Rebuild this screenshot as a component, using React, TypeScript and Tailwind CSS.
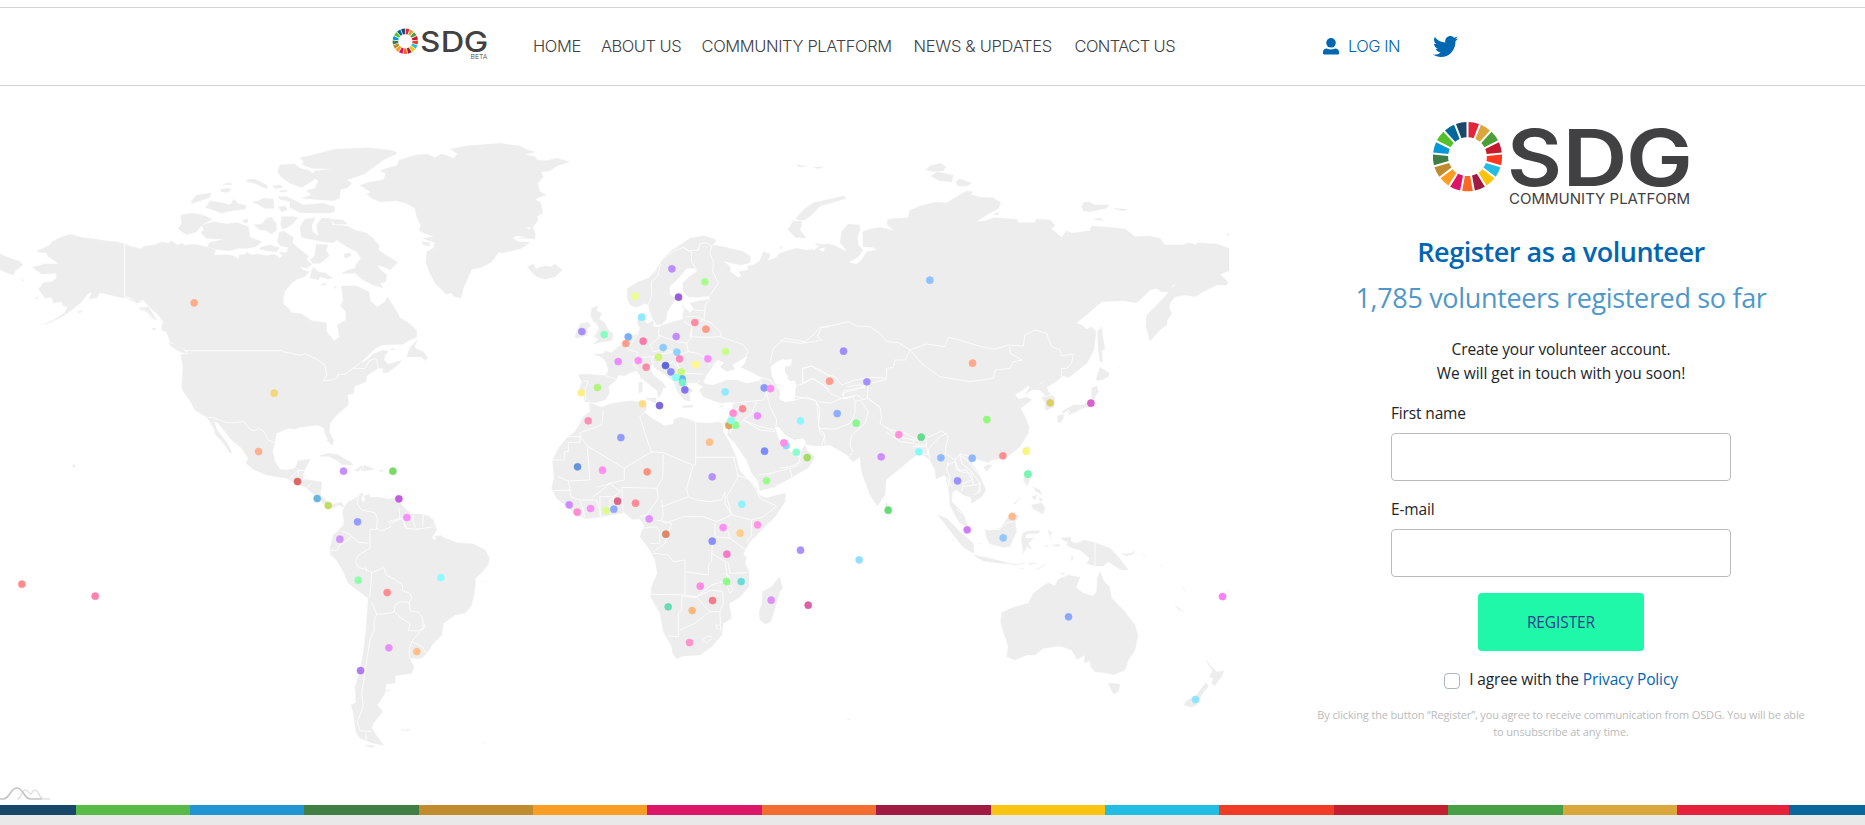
import React from 'react';

const GOALS = [
  '#e5243b', '#dda63a', '#4c9f38', '#c5192d', '#ff3a21', '#26bde2', '#fcc30b', '#a21942', '#fd6925',
  '#dd1367', '#fd9d24', '#bf8b2e', '#3f7e44', '#0a97d9', '#56c02b', '#00689d', '#19486a',
];

const STRIPES = [
  'w-[75.5px] bg-[#17486a]', 'flex-1 bg-[#58ba47]', 'flex-1 bg-[#2095d3]', 'flex-1 bg-[#3f7f44]',
  'flex-1 bg-[#c08c2d]', 'flex-1 bg-[#f99d25]', 'flex-1 bg-[#dd1768]', 'flex-1 bg-[#f36c30]',
  'flex-1 bg-[#a11a44]', 'flex-1 bg-[#fbc412]', 'flex-1 bg-[#22bde2]', 'flex-1 bg-[#f03c27]',
  'flex-1 bg-[#c31f2f]', 'flex-1 bg-[#48a045]', 'flex-1 bg-[#dca73a]', 'w-[112px] bg-[#e5213b]',
  'w-[76px] bg-[#08679d]',
];

type Dot = [number, number, string];
// Shapes of a region are in thirds of a pixel, measured from its origin.
type Region = { x: number; y: number; land: string[]; water?: string[]; borders: string[]; dots: Dot[] };

const REGIONS: Region[] = [
  {
    x: 0, y: 130,
    land: [
      '110,362 125,357 145,348 160,333 183,322 211,313 235,320 258,324 285,327 325,334 352,336 374,342 395,350 425,356 430,349 462,346 485,336 505,340 515,333 533,346 545,339 555,346 585,343 620,351 648,360 640,376 675,374 700,377 716,388 718,374 735,374 742,366 752,374 775,373 800,377 825,373 838,385 848,378 837,366 860,368 865,352 842,348 832,335 838,308 850,303 880,322 878,338 895,355 925,378 920,390 936,403 920,415 902,409 905,418 928,425 915,440 890,448 875,460 855,482 850,505 850,522 862,532 875,548 905,552 935,572 978,578 980,605 1003,632 1018,620 1012,585 1037,570 1038,545 1022,527 1030,510 1024,468 1045,468 1068,467 1090,478 1107,485 1110,512 1132,531 1155,515 1162,500 1180,528 1195,552 1198,562 1230,582 1250,600 1250,622 1225,632 1208,643 1145,645 1125,656 1100,680 1072,705 1100,690 1120,672 1150,660 1165,665 1155,675 1152,690 1165,703 1190,695 1205,692 1190,708 1162,728 1148,727 1150,715 1135,714 1115,727 1100,738 1098,755 1065,768 1060,790 1042,795 1046,815 1042,828 1010,855 990,880 988,905 1000,930 998,945 990,940 975,912 972,895 955,885 930,888 900,892 885,897 865,895 830,910 824,935 818,965 825,995 840,1018 860,1020 885,1015 895,992 930,988 925,1000 912,1025 912,1048 930,1050 965,1057 962,1095 978,1112 990,1122 1005,1122 1025,1116 1032,1130 1022,1128 1015,1125 1000,1134 985,1130 960,1112 940,1092 920,1073 890,1062 860,1045 830,1040 800,1035 760,1018 738,1000 745,985 725,955 695,930 675,905 655,880 643,873 648,895 665,918 682,940 697,970 688,965 668,937 645,912 645,900 632,880 620,862 585,840 570,812 550,785 545,770 547,740 549,710 542,673 565,673 560,662 540,650 510,635 500,605 485,600 487,575 470,550 450,535 430,512 410,522 385,505 360,502 340,497 310,490 297,490 292,502 268,508 275,486 262,492 245,515 215,540 185,560 155,575 130,584 165,568 195,548 203,530 190,528 185,515 160,518 155,502 135,505 125,490 115,478 130,458 155,455 170,445 168,430 125,432 98,412 135,402 175,402 160,390 145,380 140,368 118,367',
      '0,372 20,380 45,390 58,393 68,405 60,412 48,420 40,434 20,428 0,418',
      '543,255 575,250 605,254 637,268 610,282 588,306 560,314 533,296 545,282',
      '605,285 640,275 680,282 712,278 745,290 750,322 785,335 768,350 740,355 715,355 688,362 650,358 622,350 628,338 672,328 620,325 602,308 612,300',
      '617,233 630,212 665,218 690,225 702,208 715,222 738,226 735,238 690,243 665,250 640,240',
      '572,215 590,195 634,189 628,203 600,212 578,220', '660,180 680,175 694,177 685,186 665,186', '668,163 690,158 698,164', '740,148 765,148 800,165 803,176 785,170 765,160 742,155',
      '756,215 775,213 790,205 820,208 822,235 795,235 778,225', '818,168 840,165 850,172 825,176', '838,182 862,181 860,185 842,186',
      '835,120 840,105 882,102 900,115 930,122 948,145 925,160 905,172 870,160 845,142 832,125',
      '900,84 950,72 1005,58 1105,53 1180,62 1192,70 1150,90 1125,108 1092,133 1040,150 1055,160 1040,175 1022,178 1018,205 1000,212 905,205 935,195 920,182 945,175 955,153 935,135 945,122 1000,117 935,115 905,103 912,95',
      '835,200 860,200 882,210 910,225 970,220 1003,230 1003,245 985,249 900,248 870,232 870,215 840,208', '835,232 855,228 862,240 845,245',
      '845,260 880,260 893,263 880,280 858,295 848,298 842,285', '762,285 785,282 800,265 815,262 828,280 830,300 815,312 795,300 780,300',
      '728,270 742,266 745,276 735,280', '785,350 810,345 838,353 830,365 800,362 778,357',
      '903,315 900,290 915,268 945,264 935,285 938,305 955,318 950,285 965,265 990,265 998,285 1040,288 1065,300 1100,310 1120,325 1138,348 1135,360 1165,380 1193,397 1182,408 1170,420 1155,412 1130,405 1142,420 1160,435 1158,455 1140,460 1148,473 1120,465 1090,450 1065,430 1025,430 1040,422 1065,415 1068,405 1083,385 1070,365 1040,350 1010,330 1000,338 970,335 935,328 918,325 905,322',
      '990,267 1030,270 1042,282 1005,283', '1032,372 1050,368 1053,378 1035,385',
      '948,343 985,345 978,360 988,378 960,400 938,400 930,390 945,378', '940,412 955,425 978,430 998,444 985,447 960,440 955,450 930,443 935,420',
      '962,465 980,458 975,466', '1003,470 1008,468 1007,476', '1253,628 1243,650 1250,658 1270,665 1283,685 1275,692 1265,680 1220,680 1232,650',
      '505,638 530,645 552,660 563,672 540,665 515,650', '232,545 250,541 240,549', '457,595 467,594 462,603', '418,533 445,530 470,570 455,565 440,545 422,540',
      '105,503 115,500 112,507', '62,448 72,452', '218,1002 228,1008 220,1014', '960,978 985,970 1010,975 1050,998 1058,1005 1025,1003 1010,990 985,978',
      '1088,1008 1118,1018 1090,1020 1065,1020', '1170,658 1185,655 1180,660',
    ],
    borders: [
      '374,342 374,500 395,505 410,522 430,510 460,545 488,570 485,585', '560,662 845,662 855,667 875,669 885,673 905,676 915,671 950,687 975,705 980,735 970,752 995,750 1013,743 1013,733 1035,733 1060,715 1095,716 1110,690 1128,686 1135,714',
      '1060,715 1080,700', '620,862 645,864 680,878 710,878 730,873 750,898 765,903 775,895 790,903 805,930 822,938', '870,1046 880,1035 895,1020 912,1022', '895,1020 895,1040', '900,1055 915,1046', '1088,1000 1090,1020', '425,535 450,555 468,575', '430,550 460,580',
    ],
    dots: [[582, 518, '#ffac88'], [822, 789, '#f4d67b'], [775, 964, '#ffb08d']],
  },
  {
    x: 300, y: 130,
    land: [
      '180,165 215,155 250,150 258,130 240,122 270,112 290,108 298,90 345,76 380,72 405,83 425,72 462,85 472,72 452,57 500,48 600,40 660,48 682,60 705,66 672,73 705,80 712,90 740,92 770,85 808,95 770,108 750,122 722,125 730,140 712,160 720,185 738,195 722,200 705,208 722,218 728,250 710,258 715,268 698,293 675,290 705,310 705,326 665,325 640,328 655,335 690,337 665,355 605,370 597,366 575,395 545,412 515,418 505,440 490,475 482,505 460,498 455,488 438,492 405,460 390,430 378,398 380,365 400,355 405,338 370,325 402,320 358,303 362,285 350,260 345,235 320,220 290,212 240,215 215,205 200,192 212,187',
      '365,335 390,338 388,348 370,345', '682,410 700,402 708,418 718,413 735,408 752,410 765,403 787,420 765,440 735,448 710,440 695,425',
    ],
    water: ['638,325 650,317 685,322 665,322 650,327'],
    borders: [],
    dots: [],
  },
  {
    x: 280, y: 440,
    land: [
      '190,205 205,185 235,170 245,158 250,163 243,175 250,188 256,178 253,168 268,163 270,172 295,172 330,178 350,172 360,190 375,205 395,222 420,222 445,228 460,240 470,270 455,295 465,300 490,292 530,308 580,312 615,330 628,355 625,372 607,395 587,415 583,460 575,495 555,520 525,525 490,550 485,585 460,610 440,640 425,655 388,655 402,680 395,700 345,707 345,730 318,732 315,760 292,795 308,815 280,850 275,865 285,880 310,915 280,910 240,895 228,875 220,820 213,795 228,788 225,740 238,700 250,640 258,570 265,475 205,430 190,395 170,360 152,345 150,325 160,285 175,272 190,255 192,240 188,220',
      '465,288 485,287 490,297 470,300', '140,0 162,0 155,15', '120,48 145,40 175,45 215,68 218,74 185,72 170,60 145,48', '222,90 240,88 235,94', '240,78 258,77 282,88 255,92 240,90',
      '297,91 310,91 308,95 298,94', '365,868 375,870 370,874', '378,868 390,867 382,874', '315,750 332,751 322,754', '607,905 618,912', '255,915 285,917 275,923', '356,170 366,168 364,176',
    ],
    borders: [
      '235,170 232,192 245,210 285,218 292,235 290,268 270,268 270,325 235,345 227,365 235,383 258,388 275,398 272,445 268,475', '150,330 170,333 180,315 210,295 212,285 185,272', '212,287 235,307 265,310', '292,265 305,273 333,260 325,245 360,235 357,205',
      '333,250 365,235 380,265 410,268 460,260', '400,225 398,245 410,268', '430,223 428,258', '370,235 375,262', '275,398 312,383 318,405 345,418 367,435 368,452 390,460 395,475 388,487 360,485 345,495 343,515 325,520 290,523 275,485',
      '388,487 390,512 415,517 428,535 430,565 415,573 385,572 390,550 365,535 343,515', '432,550 435,560 395,605 388,625 388,655', '395,605 425,618 440,640', '290,523 282,545 283,570 270,600 262,650 255,700 245,760 250,800 232,845 240,872 275,875', '258,880 258,915', '258,380 260,395', '242,85 242,95',
      '95,130 80,143', '70,100 72,118', '128,150 118,160',
    ],
    dots: [[190, 93, '#c58fff'], [338, 93, '#79db66'], [52, 124, '#dc6766'], [111, 175, '#67b5dc'], [144, 196, '#c2db62'], [356, 176, '#c35ddb'], [232, 245, '#919eff'], [380, 232, '#f78eff'], [179, 297, '#cf93ff'], [234, 420, '#8effac'], [482, 412, '#90fbff'], [321, 457, '#ff8c93'], [326, 623, '#e690ff'], [410, 634, '#ffc08c'], [241, 691, '#ad79f5']],
  },
  {
    x: 530, y: 220,
    land: [
      '165,545 160,525 145,525 150,500 155,485 145,465 160,462 200,465 228,467 235,450 228,425 215,412 193,402 220,402 225,393 245,398 262,382 280,372 295,355 325,340 330,325 322,310 325,290 340,278 352,285 345,305 355,315 378,322 400,315 440,302 460,298 458,282 465,265 480,278 492,265 480,250 510,242 540,238 538,228 500,232 475,230 460,215 458,190 478,170 500,155 495,145 470,145 458,160 440,180 418,200 420,225 440,235 425,255 412,275 408,300 395,313 380,315 370,300 360,275 355,255 345,250 320,262 300,255 292,235 292,205 325,185 355,175 375,155 395,120 420,95 450,75 480,55 520,47 555,58 558,65 545,75 580,80 640,95 662,110 660,128 630,135 600,128 578,122 600,140 600,155 625,173 635,165 625,155 655,150 652,138 670,135 690,122 700,95 722,103 712,122 735,115 750,100 780,90 800,85 850,95 865,78 895,72 900,72 900,675 860,678 820,672 785,660 765,645 735,622 725,650 600,650 592,615 578,612 590,600 608,570 610,548 600,545 575,550 545,540 520,530 508,510 520,500 500,490 480,490 468,497 490,512 478,520 480,545 465,540 450,525 440,510 432,485 400,460 375,445 368,432 358,440 370,465 395,485 410,503 400,503 395,520 384,534 382,512 370,503 345,483 330,465 320,452 300,458 285,467 265,465 258,480 235,500 238,520 225,540 195,548',
      '185,265 203,258 200,272 215,280 208,297 225,310 235,330 250,342 245,362 215,366 190,372 205,358 192,350 200,340 207,325 200,310 190,305 182,285', '150,312 175,306 182,318 172,325 172,345 140,355 135,350 140,335', '345,535 378,533 377,550', '326,488 337,485 337,515 327,518', '330,470 337,462 337,480', '455,558 490,555 485,562 460,563', '350,312 368,303 372,315 355,320', '775,30 790,8 812,3 815,15 805,35 825,55 795,50', '568,560 580,554 576,562', '0,25 8,20 15,40 12,55 0,52', '457,260 462,255 460,268',
    ],
    water: [
      '520,487 530,465 545,445 552,430 565,420 582,428 570,440 590,455 615,448 608,435 625,425 640,415 652,408 645,430 632,442 670,460 695,475 685,483 650,490 620,480 590,480 550,495 528,492',
      '722,440 740,425 760,418 785,430 782,437 755,442 748,452 765,462 775,480 770,490 795,500 795,515 795,542 765,546 747,535 752,515 735,490 725,465',
      '865,88 885,82 880,95', '735,622 745,620 765,645 790,660 820,655 828,668 815,690 790,700 765,682 745,650',
    ],
    borders: [
      '355,255 365,225 365,185 385,165 392,125 420,100 460,82 485,98 485,125 500,150', '460,82 475,92 505,90 510,70 530,68 545,78 540,100 550,125 548,155 565,190 540,225', '540,238 525,255 525,275 522,300 545,310 575,340 570,350 530,352 480,350 485,320 520,300', '465,290 500,290 522,300', '485,318 462,305', '490,270 525,272', '388,318 385,345 410,355 445,365 470,370 485,350 485,325', '470,370 475,395 460,400 430,395 400,390 370,395 360,375 385,355 390,345', '280,375 300,390 325,398 315,420 310,432 325,452', '315,415 340,412 370,410 365,425 375,430', '370,410 400,400 430,398 440,420 420,430 395,430 375,445', '475,395 505,400 520,410 540,435', '430,430 455,450 470,460 520,462', '455,400 440,425 450,455 455,490 500,490', '500,490 510,480', '570,350 600,360 640,375 655,395 645,410', '160,482 175,485 165,510 168,540', '228,467 258,478', '325,340 310,360 300,380', '695,478 670,465 720,480 735,500 750,510', '690,483 710,520 700,540 650,545 610,550', '610,575 630,560 650,545', '640,600 665,580 680,545', '640,600 690,620 735,630', '710,520 720,560 740,600 738,622', '720,430 730,385 765,355 825,365 855,340 870,322 900,320', '818,490 818,445 845,438 880,455 900,470', '795,540 830,530 860,545 865,600 870,640 885,650 885,675', '795,500 820,490 850,475 900,510', '600,608 605,580', '625,600 605,610 600,640', '790,700 805,710 815,690'],
    dots: [[425, 146, '#b98fff'], [524, 185, '#a9ff8c'], [315, 228, '#ebff8c'], [445, 231, '#9b5ddb'], [334, 291, '#8feaff'], [155, 334, '#aa8cff'], [222, 343, '#84ffc0'], [294, 350, '#78b0ff'], [287, 370, '#ff9c87'], [339, 363, '#f97bab'], [438, 349, '#c18dff'], [494, 307, '#ff8aa5'], [527, 327, '#ff9c88'], [399, 382, '#8dcbff'], [440, 396, '#8ed3ff'], [385, 411, '#cdf576'], [448, 416, '#ff8abf'], [264, 424, '#e98cff'], [324, 421, '#ff8efb'], [348, 441, '#ff8aa3'], [533, 416, '#f98eff'], [586, 394, '#c6ff8a'], [497, 433, '#fff98b'], [406, 436, '#5d67db'], [422, 455, '#898cff'], [453, 455, '#c9fa7f'], [456, 476, '#67b7e8'], [437, 472, '#88fff6'], [457, 487, '#76f1cb'], [464, 509, '#8571f4'], [202, 502, '#b0f67c'], [153, 518, '#ffee88'], [337, 551, '#ffdc87'], [388, 556, '#7d66dc'], [585, 515, '#8feaff'], [702, 503, '#889aff'], [721, 505, '#ff8cf0'], [637, 566, '#ff8a95'], [609, 579, '#ff8dd2'], [596, 616, '#dba855'], [616, 615, '#8cff94'], [603, 601, '#8bffe5'], [682, 587, '#e98eff'], [811, 602, '#8cf7ff'], [174, 602, '#ff8fb8'], [272, 652, '#929cff'], [538, 666, '#ffc08c'], [703, 693, '#7c8bfa'], [768, 676, '#8edaff'], [761, 668, '#ff8de5'], [798, 696, '#8bffd0'], [831, 712, '#a1dc63'], [142, 740, '#6692de'], [217, 750, '#ff8ff1'], [351, 755, '#fb9180'], [546, 770, '#b590ff'], [709, 782, '#98ff89']],
  },
  {
    x: 530, y: 400,
    land: [
      '178,10 190,12 215,22 240,12 260,8 300,3 330,5 345,3 350,22 345,38 370,58 405,78 430,72 432,58 450,52 475,57 500,68 540,70 560,66 577,70 580,95 600,130 618,170 628,210 650,235 680,265 686,285 710,294 730,288 767,280 765,305 735,350 700,385 660,425 645,450 640,462 650,475 645,490 657,515 657,560 630,590 597,612 605,655 580,670 575,705 545,740 510,765 460,768 440,777 428,760 425,740 400,695 390,640 362,590 365,560 382,520 375,480 360,450 330,410 343,375 330,357 305,358 285,338 245,345 215,350 165,357 140,345 105,315 80,295 65,265 72,235 68,180 85,145 110,115 135,95 150,70 160,50 180,35',
      '597,78 592,105 615,130 650,180 665,220 683,240 690,272 730,262 780,235 835,203 855,170 830,150 822,128 812,150 790,162 770,145 745,112 735,80 725,5 612,0 605,50',
      '748,530 758,565 750,575 735,625 722,665 705,672 690,660 688,635 697,610 697,575 725,560', '811,624 816,626', '765,40 820,25 860,35 960,35 960,170 900,135 830,130 790,120 765,100',
    ],
    water: ['738,83 748,83 765,105 792,120 820,115 828,130 812,150 790,160 768,143 745,112'],
    borders: [
      '72,272 120,270 122,290 150,300 158,325 158,355', '68,180 103,180 103,155 115,155 115,127 150,127 150,98 215,75 220,30', '103,110 150,110', '150,110 175,140 283,205 283,240 240,250 200,262', '172,140 180,240 115,243 85,230', '283,205 365,155 400,158 487,195 487,205 470,265 475,290 395,320', '365,158 345,100 330,50 350,30', '400,165 398,235 380,265 275,262 280,340', '380,265 385,295 350,345 330,350', '395,300 400,345 395,360 405,370 460,350 520,350 560,365 605,345 585,310 585,280', '497,68 497,172 620,172', '497,172 497,195 487,195', '475,290 500,300 540,305 575,300 585,275', '610,170 625,230 590,290', '590,290 605,345 665,360 700,350 740,318 695,298 680,280', '665,360 663,410 650,425', '620,225 660,240 685,280', '555,370 555,410 600,415 645,448', '550,415 545,460 595,490 600,520 655,518', '545,460 545,485 535,495 535,525 465,515 465,480 430,485 415,465 370,460', '380,360 425,370 405,430 370,455', '335,385 380,380 390,395 388,430 360,430', '465,515 465,585 362,583', '465,585 500,590 545,555 595,540 585,490', '455,590 455,630 445,640 445,710 415,708', '455,590 500,592 540,635 570,635 580,610 578,575 545,570 500,590', '540,635 495,670 450,690', '570,635 572,690 560,685 558,675 572,675', '595,540 610,570 600,580 592,560', '210,350 210,290 250,290 255,340', '185,295 240,250 270,275 240,300 240,340', '150,300 200,300 215,350', '165,357 158,320', '545,715 530,730 520,720 530,708 545,710', '600,95 640,60 690,90 735,95', '683,225 720,220 780,205 785,230', '780,205 805,195 812,160', '600,412 590,385 600,370', '580,520 600,530', '115,243 120,270'],
    dots: [[117, 314, '#cb8cff'], [141, 336, '#ff8cd0'], [181, 325, '#fb90f7'], [228, 331, '#dbff86'], [251, 327, '#90a8ff'], [262, 303, '#db6688'], [316, 309, '#ff8c98'], [357, 356, '#df8fff'], [407, 402, '#dc8766'], [635, 312, '#90f4ff'], [579, 382, '#ff8ef5'], [682, 374, '#ff93e2'], [630, 399, '#ffcf88'], [546, 423, '#8c8dff'], [590, 462, '#f97acb'], [589, 544, '#8aff87'], [633, 544, '#66dcdb'], [510, 558, '#ff8ce0'], [547, 601, '#f57a8c'], [414, 620, '#65dcb6'], [486, 631, '#f9b77d'], [723, 600, '#dc8fff'], [834, 615, '#db62a5'], [478, 727, '#ff93cd'], [811, 450, '#ab90ff']],
  },
  {
    x: 780, y: 150,
    land: [
      '0,313 35,302 50,308 95,298 108,305 118,292 105,280 120,283 160,285 200,305 195,295 180,278 185,245 205,222 238,225 240,240 232,260 235,285 248,300 235,320 205,337 230,343 245,330 260,305 290,300 280,292 250,290 248,245 270,237 300,232 345,243 322,225 322,208 385,203 388,183 420,168 465,157 500,158 530,140 560,123 580,125 570,133 600,142 640,143 662,158 655,175 620,195 588,215 615,213 640,203 665,205 710,208 715,218 765,218 768,207 810,210 825,225 815,237 845,262 860,242 875,250 930,242 935,228 1000,233 1035,237 1065,260 1105,258 1140,265 1155,285 1210,285 1245,300 1252,278 1310,282 1347,295 1347,362 1320,373 1343,395 1340,405 1310,405 1270,425 1245,440 1215,435 1185,440 1170,460 1168,475 1175,492 1162,510 1160,525 1140,540 1110,573 1098,530 1100,495 1125,470 1150,445 1185,405 1180,403 1170,425 1145,425 1130,415 1110,420 1085,445 1070,458 1030,452 965,455 930,485 888,520 905,525 920,538 935,530 948,545 942,600 920,640 880,672 865,683 850,677 820,700 800,712 805,725 825,745 822,770 797,782 795,758 785,742 795,735 780,720 755,718 765,712 800,690 780,700 757,718 735,735 750,712 745,706 725,722 705,733 715,748 740,742 755,750 722,775 735,800 747,830 745,850 720,890 690,915 668,925 635,930 625,938 600,930 585,925 575,942 590,960 605,990 617,1020 605,1040 575,1060 572,1042 550,1035 530,1020 518,1025 515,1055 535,1075 555,1100 562,1130 540,1120 525,1095 510,1065 508,1030 500,990 495,975 468,987 465,960 450,930 430,915 410,915 390,930 360,955 318,990 315,1035 292,1068 270,1035 245,965 240,920 220,935 205,922 218,912 205,908 175,885 80,882 60,870 20,865 0,845',
      '48,205 70,180 100,158 150,148 190,138 200,145 150,160 120,168 100,190 75,210 55,210', '23,240 40,212 65,215 60,240 78,262 45,262 45,248', '50,45 80,48 60,52', '100,52 130,50 115,56', '437,60 450,47 480,40 498,50 490,62 460,65', '452,78 470,66 520,75 515,96 480,92', '527,98 538,86 575,100 560,108 535,108', '905,170 910,158 925,155 945,165 988,165 978,175 930,185 910,182', '1000,175 1043,178 1030,183', '942,208 960,204 970,212', '640,192 655,188 655,195', '1338,255 1347,250 1347,258', '1210,285 1225,278 1250,285 1245,300',
      '953,545 965,530 968,560 975,598 965,600 968,635 960,635 955,600', '948,688 960,652 988,670 985,680 965,690 950,690', '935,715 950,708 955,725 945,740 942,765 925,772 905,775 880,790 865,780 850,790 845,785 880,765 910,765 935,745', '833,798 850,793 850,805 840,818 833,815', '865,785 880,785 870,795', '612,955 620,945 635,948 620,962', '735,895 748,888 740,915', '735,975 745,960 750,980', '1178,460 1185,462', '1018,652 1021,654', '0,290 6,292 0,296',
    ],
    water: ['0,630 38,628 32,640 15,648 15,665 25,680 20,688 48,700 45,745 20,755 0,750 0,715', '45,690 32,695 25,702 48,708', '105,290 118,285 115,292'],
    borders: [
      '0,572 30,575 60,580 105,575 125,570 112,560 125,532 165,525 205,515 230,528 270,530 300,550 320,575 355,578 390,600 440,582 495,590 505,562 540,570 580,583 605,590 640,598 685,585 730,588 735,555 765,540 800,550 815,590 840,600 845,618 880,612 875,640 860,655 845,655 845,683', '390,600 430,645 480,680 570,695 640,685 645,660 690,655 700,635 727,630 690,610 690,590', '390,600 375,630 345,630 340,652 320,655 320,685', '68,700 68,655 95,648 130,670 165,680 185,705 225,690 275,682 320,685', '68,700 95,685 130,705 150,730 185,745 205,745', '320,688 270,700 225,720 200,725 185,735', '200,710 240,705 255,712 190,722 190,745 230,735 250,748', '265,700 262,745 300,772 305,805 300,820 320,835 375,850 405,865 450,860 485,842 505,860 500,880', '0,745 50,740 105,750 120,775 115,830 135,855 125,885', '115,755 150,760 185,745 220,740 225,755 265,745 300,772', '120,835 165,838 210,820 225,790 225,755', '245,755 265,785 255,820 215,855 210,885 220,908', '320,832 355,860 400,870 402,880 360,875 320,845', '400,870 440,870 440,885 405,885', '400,890 440,890 445,915 410,905', '440,910 450,890 480,860 500,850', '445,900 450,928', '500,880 495,910 525,930 540,912 585,922', '505,935 500,960 510,980 505,1010', '540,912 545,940 575,965 600,1000 595,1030', '525,930 530,960 560,960 575,990 550,1000 545,1025', '780,742 815,735', '0,955 30,950 65,935'],
    dots: [[449, 390, '#8fc0ff'], [190, 603, '#a08cff'], [577, 639, '#ffa98c'], [148, 693, '#ff9c90'], [260, 695, '#a491ff'], [171, 790, '#90aeff'], [228, 819, '#86fa8f'], [356, 853, '#ff90dc'], [423, 861, '#65db90'], [416, 905, '#83fbff'], [303, 920, '#cf8cff'], [482, 923, '#8fb8ff'], [576, 924, '#8fb8ff'], [620, 808, '#91f97b'], [810, 758, '#dccf65'], [932, 759, '#db62ca'], [738, 903, '#f6f57c'], [668, 917, '#ff8f8f'], [743, 972, '#7df4b2']],
  },
  {
    x: 800, y: 380,
    land: [
      '900,575 910,600 917,610 928,620 935,655 970,690 1005,735 1014,768 1005,810 985,840 975,870 940,884 915,878 885,875 872,860 870,842 852,850 855,825 832,838 815,810 780,798 730,805 705,825 680,825 645,840 620,830 625,800 610,755 602,725 605,698 640,682 685,670 700,640 720,625 745,608 765,618 775,598 805,585 840,592 828,622 850,640 880,648 890,635 892,595',
      '925,910 960,912 955,935 940,942', '1217,840 1235,860 1250,875 1272,872 1265,890 1243,917 1235,910 1240,895 1228,892 1238,872', '1217,908 1226,918 1205,945 1190,975 1175,982 1152,975 1160,962 1190,945',
      '413,405 440,415 480,455 520,490 522,520 490,502 460,465 430,425', '520,525 570,535 610,545 640,552 600,550 550,543', '570,452 600,445 615,425 635,395 658,408 645,425 650,455 640,475 630,500 610,502 570,492 560,475 555,448',
      '668,460 685,452 720,452 715,460 680,462 675,475 700,475 685,490 695,508 680,500 670,520 665,480', '785,473 812,472 812,485 830,490 852,480 885,488 930,505 955,530 985,570 960,568 925,545 910,558 885,558 860,550 870,535 840,510 818,505 800,495 805,485 788,480',
      '965,522 995,520 1002,510 1000,522 980,528', '1028,520 1038,532', '675,290 690,285 688,305 680,318 670,300', '698,320 720,330 725,345 710,335', '695,375 725,368 735,385 728,402 710,392 698,385', '640,372 662,352 645,372', '695,350 712,345 705,360', '718,350 728,360 720,365', '637,552 655,552 675,550 640,555', '685,550 712,550 690,554', '710,568 738,552 720,565', '745,450 757,460 748,465 755,480 748,465', '732,497 745,495 740,499', '757,495 780,493 775,500', '815,525 820,535 814,542', '780,580 795,580 790,585', '1125,675 1150,695 1135,688', '1148,620 1155,632', '1278,638 1285,633', '142,1018 150,1018', '435,448 442,455', '455,475 462,485', '535,490 545,490', '258,365 268,380 262,392 256,380', '660,565 672,566', '1083,555 1090,560', '553,262 565,255 575,255 562,272',
    ],
    borders: ['885,488 885,558', '560,448 600,448 615,430 640,425', '470,388 485,400', '490,320 525,315 540,310 540,335 520,345', '440,255 465,245 480,275 515,280 520,315', '455,320 440,290', '483,228 500,240 520,265 548,295'],
    dots: [[472, 302, '#9b90ff'], [683, 282, '#7df5b2'], [264, 390, '#65db73'], [636, 409, '#ffb98c'], [501, 449, '#d07cf8'], [609, 473, '#90c8ff'], [177, 539, '#8fdfff'], [805, 710, '#8ba8ff'], [1267, 649, '#f680f9'], [1186, 958, '#90e4ff']],
  },
  { x: 0, y: 560, land: ['2137,135 2142,136', '1455,65 1460,67'], borders: [], dots: [[65, 72, '#ff8c8c'], [285, 108, '#ff7fb0']] },
];

function WorldMap() {
  return (
    <svg width="1229" height="719" viewBox="0 86 1229 719" className="block shrink-0" aria-hidden="true">
      {REGIONS.map((r, i) => (
        <g key={i} transform={`translate(${r.x} ${r.y}) scale(.33333)`}>
          {r.land.map((p, k) => <polygon key={k} points={p} fill="#ededed" stroke="#ededed" strokeWidth="1.2" strokeLinejoin="round" />)}
        </g>
      ))}
      {REGIONS.map((r, i) => (
        <g key={i} transform={`translate(${r.x} ${r.y}) scale(.33333)`}>
          {r.water?.map((p, k) => <polygon key={k} points={p} fill="#fff" />)}
          {r.borders.map((p, k) => <polyline key={k} points={p} fill="none" stroke="#fff" strokeWidth="2.8" strokeLinejoin="round" opacity=".85" />)}
        </g>
      ))}
      {REGIONS.map((r, i) => (
        <g key={i} transform={`translate(${r.x + 0.2} ${r.y + 0.2}) scale(.33333)`}>
          {r.dots.map(([x, y, c], k) => <circle key={k} cx={x} cy={y} r="10.8" fill={c} stroke={c} strokeOpacity=".5" strokeWidth="2.6" />)}
        </g>
      ))}
      <g fill="none" strokeWidth="1.6">
        <path d="M17 799C22 799 21 790 25.500 790C28 790 29 794 30.500 794C32 794 32 790 35 790C39 790 39 799 44 799H50" stroke="#e2e2e2" />
        <path d="M0 799H3C10 799 10 788 17 788C24 788 23 799 31 799H42" stroke="#c4c4c4" />
      </g>
    </svg>
  );
}

function Wheel({ cx, cy, r }: { cx: number; cy: number; r: number }) {
  const step = (Math.PI * 2) / 17;
  const inner = r * 0.56;
  const at = (rad: number, a: number) => `${(cx + rad * Math.sin(a)).toFixed(2)} ${(cy - rad * Math.cos(a)).toFixed(2)}`;
  return (
    <>
      {GOALS.map((c, i) => {
        const a = i * step + 0.03;
        const b = (i + 1) * step - 0.03;
        return <path key={c} fill={c} d={`M${at(inner, a + 0.02)}L${at(r, a)}A${r} ${r} 0 0 1 ${at(r, b)}L${at(inner, b - 0.02)}A${inner} ${inner} 0 0 0 ${at(inner, a + 0.02)}Z`} />;
      })}
    </>
  );
}

function HeaderLogo() {
  return (
    <svg width="98" height="34" viewBox="392 27 98 34" className="shrink-0 overflow-visible">
      <Wheel cx={405.3} cy={41.3} r={12.7} />
      <g fill="#414042" fontFamily="Inter, sans-serif">
        <text y="51.800" fontSize="28.500" fontWeight="500">
          <tspan x="420.300" textLength="20" lengthAdjust="spacingAndGlyphs">S</tspan>
          <tspan x="440.800" textLength="23.500" lengthAdjust="spacingAndGlyphs">D</tspan>
          <tspan x="463.800" textLength="24.500" lengthAdjust="spacingAndGlyphs">G</tspan>
        </text>
        <text x="470.500" y="59.200" fontSize="6.300" textLength="17" lengthAdjust="spacingAndGlyphs">BETA</text>
      </g>
    </svg>
  );
}

function PlatformLogo() {
  return (
    <svg width="258" height="86" viewBox="1432 120 258 86" className="block overflow-visible">
      <Wheel cx={1467.5} cy={156.7} r={34.6} />
      <g fill="#414042" fontFamily="Inter, sans-serif">
        <text y="185.600" fontSize="78.500" fontWeight="600">
          <tspan x="1507" textLength="55" lengthAdjust="spacingAndGlyphs">S</tspan>
          <tspan x="1562.500" textLength="65" lengthAdjust="spacingAndGlyphs">D</tspan>
          <tspan x="1626" textLength="67" lengthAdjust="spacingAndGlyphs">G</tspan>
        </text>
        <text x="1509" y="204" fontSize="14.500" fontWeight="400" textLength="181" lengthAdjust="spacingAndGlyphs">COMMUNITY PLATFORM</text>
      </g>
    </svg>
  );
}

const NAV = [
  { label: 'HOME', width: 'w-[68px] tracking-[-0.35px]' },
  { label: 'ABOUT US', width: 'w-[100.5px] tracking-[-0.5px]' },
  { label: 'COMMUNITY PLATFORM', width: 'w-[212px] tracking-[-0.38px]' },
  { label: 'NEWS & UPDATES', width: 'w-[161px] tracking-[-0.3px]' },
  { label: 'CONTACT US', width: 'w-[120.5px] tracking-[-0.6px]' },
];

function Header() {
  return (
    <header className="mt-[7px] flex h-[79px] items-center border-y border-[#d3d3d3] pl-[392px] text-[16.5px] font-[350] whitespace-nowrap text-[#414042]" style={{ fontFamily: '"Inter", sans-serif' }}>
      <div className="-mt-1.5 flex w-[141px]"><HeaderLogo /></div>
      <nav className="flex">
        {NAV.map((n) => <a key={n.label} href="#" className={n.width}>{n.label}</a>)}
      </nav>
      <a href="#" className="ml-[128px] flex w-[110px] items-center gap-[9px] tracking-[-0.5px] text-[#0066b3]">
        <svg width="16" height="17" viewBox="0 0 16 17" fill="#0068b3" className="shrink-0">
          <circle cx="8" cy="4.800" r="4.800" />
          <path d="M4 10.500C6 11.700 10 11.700 12 10.500C14.500 10.500 16 12 16 14V15.500Q16 16.500 15 16.500H1Q0 16.500 0 15.500V14C0 12 1.500 10.500 4 10.500Z" />
        </svg>
        LOG IN
      </a>
      <svg width="25" height="21" viewBox="0 48 512 416" preserveAspectRatio="none" fill="#0068b3" className="shrink-0">
        <path d="M459.370 151.716c.325 4.548.325 9.097.325 13.645 0 138.720-105.583 298.558-298.558 298.558-59.452 0-114.680-17.219-161.137-47.106 8.447.974 16.568 1.299 25.340 1.299 49.055 0 94.213-16.568 130.274-44.832-46.132-.975-84.792-31.188-98.112-72.772 6.498.974 12.995 1.624 19.818 1.624 9.421 0 18.843-1.300 27.614-3.573-48.081-9.747-84.143-51.980-84.143-102.985v-1.299c13.969 7.797 30.214 12.670 47.431 13.319-28.264-18.843-46.781-51.005-46.781-87.391 0-19.492 5.197-37.360 14.294-52.954 51.655 63.675 129.300 105.258 216.365 109.807-1.624-7.797-2.599-15.918-2.599-24.040 0-57.828 46.782-104.934 104.934-104.934 30.213 0 57.502 12.670 76.670 33.137 23.715-4.548 46.456-13.320 66.599-25.340-7.798 24.366-24.366 44.833-46.132 57.827 21.117-2.273 41.584-8.122 60.426-16.243-14.292 20.791-32.161 39.308-52.628 54.253z" />
      </svg>
    </header>
  );
}

function Register() {
  return (
    <section className="ml-[72px] flex w-[520px] flex-col items-center pt-[34px] text-[#212529]">
      <PlatformLogo />
      <h1 className="mt-[25px] text-[27px] leading-[42px] font-semibold tracking-[-0.46px] text-[#0066b3]">Register as a volunteer</h1>
      <h2 className="mt-[4px] text-[27px] leading-[42px] font-normal tracking-[-0.34px] text-[#4f97cb]">1,785 volunteers registered so far</h2>
      <p className="mt-[18px] text-center text-[15.5px] leading-[24px] tracking-[-0.15px]">Create your volunteer account.<br /><span className="tracking-[-0.03px]">We will get in touch with you soon!</span></p>
      <form className="flex w-[340px] flex-col">
        <label className="mt-[16px] text-[15.5px] leading-[24px] tracking-[-0.15px]">First name</label>
        <input className="mt-[8px] h-[48px] rounded-[4px] border border-[#bbb] bg-white" />
        <label className="mt-[16px] text-[15.5px] leading-[24px] tracking-[-0.15px]">E-mail</label>
        <input className="mt-[8px] h-[48px] rounded-[4px] border border-[#bbb] bg-white" />
        <button type="button" className="mt-[16px] h-[58px] w-[166px] self-center rounded-[4px] bg-[#1ff8a9] pt-px text-[15.5px] tracking-[-0.1px] text-[#293b8c]">REGISTER</button>
      </form>
      <div className="mt-[16px] flex items-center gap-[9px] text-[15.5px] leading-[24px] tracking-[-0.13px]">
        <span className="mt-1 h-[16px] w-[16px] rounded-[4px] border border-[#adb5bd]" />
        <span>I agree with the <a href="#" className="text-[#0066b3]">Privacy Policy</a></span>
      </div>
      <p className="mt-[15px] text-center text-[11px] leading-[17px] tracking-[-0.14px] whitespace-nowrap text-[#bbb]">By clicking the button “Register”, you agree to receive communication from OSDG. You will be able<br />to unsubscribe at any time.</p>
    </section>
  );
}

export default function App() {
  return (
    <div className="flex h-[825px] w-[1865px] flex-col overflow-hidden bg-white" style={{ fontFamily: '"Open Sans", "Noto Sans", sans-serif' }}>
      <Header />
      <main className="flex h-[719px] items-start">
        <WorldMap />
        <Register />
      </main>
      <div className="flex h-[10px] w-full">
        {STRIPES.map((s) => <div key={s} className={s} />)}
      </div>
      <div className="h-[10px] bg-[#e9e9e9]" />
    </div>
  );
}
